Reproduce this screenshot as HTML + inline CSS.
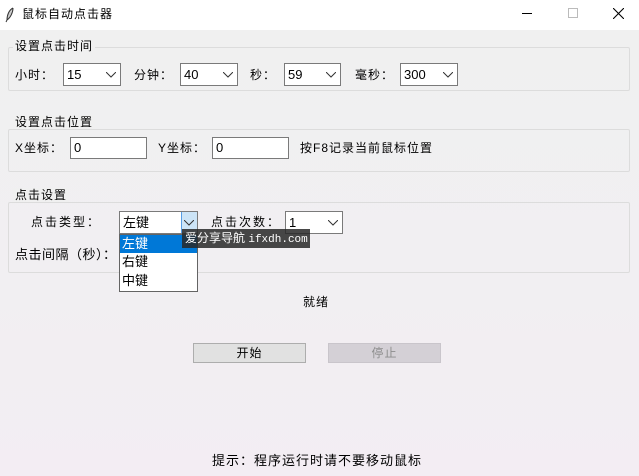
<!DOCTYPE html>
<html><head><meta charset="utf-8"><style>
*{margin:0;padding:0;box-sizing:border-box}
body{width:639px;height:476px;overflow:hidden;position:relative;background:linear-gradient(180deg,#f0f0f0 0%,#f1eff2 60%,#f3edf3 100%);font-family:"Liberation Sans","Noto Sans CJK SC",sans-serif;font-size:12px;color:#000;letter-spacing:1px}
.a{position:absolute;white-space:nowrap;line-height:14px}
.tb{position:absolute;left:0;top:0;width:639px;height:30px;background:#fff}
.grp{position:absolute;left:8px;width:622px;border:1px solid #dcdcdc;border-radius:2px}
.lbl{position:absolute;background:#f0f0f0;padding:0 2px;line-height:14px}
.cb{position:absolute;height:23px;background:#fff;border:1px solid #7a7a7a;padding-left:3px;line-height:21px;font-size:13px;letter-spacing:0}
.cb svg{position:absolute;right:4px;top:8px}
.en{position:absolute;height:22px;background:#fff;border:1px solid #7a7a7a;padding-left:3px;line-height:20px;font-size:13px;letter-spacing:0}
.btn{position:absolute;top:343px;width:113px;height:20px;border:1px solid #adadad;background:#e1e1e1;text-align:center;line-height:18px;font-size:12px}
</style></head><body>
<div class="tb">
<svg class="a" style="left:5px;top:7px" width="10" height="16" viewBox="0 0 10 16"><path d="M8 1C4 3 2 8 2 13L1 15M8 1C8 6 5 11 2 13" stroke="#333" fill="#ccc" stroke-width="1"/></svg>
<div class="a" style="left:22px;top:7px">鼠标自动点击器</div>
<div class="a" style="left:522px;top:13px;width:10px;height:1px;background:#000"></div>
<div class="a" style="left:568px;top:8px;width:10px;height:10px;border:1px solid #bbb"></div>
<svg class="a" style="left:613px;top:8px" width="11" height="11"><path d="M0 0L11 11M11 0L0 11" stroke="#000" stroke-width="1.1"/></svg>
</div>

<div class="grp" style="top:47px;height:44px"></div>
<div class="lbl" style="left:13px;top:39px">设置点击时间</div>
<div class="a" style="left:15px;top:68px">小时：</div>
<div class="cb" style="left:63px;top:63px;width:58px">15<svg width="10" height="6"><path d="M0 0L5 5L10 0" stroke="#333" fill="none"/></svg></div>
<div class="a" style="left:134px;top:68px">分钟：</div>
<div class="cb" style="left:180px;top:63px;width:58px">40<svg width="10" height="6"><path d="M0 0L5 5L10 0" stroke="#333" fill="none"/></svg></div>
<div class="a" style="left:250px;top:68px">秒：</div>
<div class="cb" style="left:284px;top:63px;width:57px">59<svg width="10" height="6"><path d="M0 0L5 5L10 0" stroke="#333" fill="none"/></svg></div>
<div class="a" style="left:355px;top:68px">毫秒：</div>
<div class="cb" style="left:400px;top:63px;width:58px">300<svg width="10" height="6"><path d="M0 0L5 5L10 0" stroke="#333" fill="none"/></svg></div>

<div class="grp" style="top:129px;height:43px"></div>
<div class="lbl" style="left:13px;top:115px">设置点击位置</div>
<div class="a" style="left:15px;top:141px">X坐标：</div>
<div class="en" style="left:70px;top:137px;width:77px">0</div>
<div class="a" style="left:158px;top:141px">Y坐标：</div>
<div class="en" style="left:212px;top:137px;width:77px">0</div>
<div class="a" style="left:300px;top:141px">按F8记录当前鼠标位置</div>

<div class="grp" style="top:202px;height:71px"></div>
<div class="lbl" style="left:13px;top:188px">点击设置</div>
<div class="a" style="left:31px;top:215px;letter-spacing:2px">点击类型：</div>
<div class="cb" style="left:119px;top:211px;width:79px">左键<div style="position:absolute;right:0;top:0;width:16px;height:21px;background:#cce4f7;border-left:1px solid #569de5"></div><svg width="10" height="6" style="right:3px"><path d="M0 0L5 5L10 0" stroke="#333" fill="none"/></svg></div>
<div class="a" style="left:211px;top:215px;letter-spacing:2px">点击次数：</div>
<div class="cb" style="left:285px;top:211px;width:58px">1<svg width="10" height="6"><path d="M0 0L5 5L10 0" stroke="#333" fill="none"/></svg></div>
<div class="a" style="left:15px;top:248px;font-size:13px;letter-spacing:0.5px">点击间隔（秒）：</div>
<div class="a" style="left:119px;top:234px;width:79px;height:58px;background:#fff;border:1px solid #646464"></div>
<div class="a" style="left:120px;top:235px;width:77px;height:18px;background:#0078d7;color:#fff;padding-left:2px;line-height:18px;font-size:13px;letter-spacing:0">左键</div>
<div class="a" style="left:122px;top:255px;font-size:13px;letter-spacing:0">右键</div>
<div class="a" style="left:122px;top:274px;font-size:13px;letter-spacing:0">中键</div>
<div class="a" style="left:182px;top:229px;width:128px;height:19px;background:rgba(40,40,40,.85);color:#fff;line-height:19px;padding-left:3px;font-size:12px;letter-spacing:0;overflow:hidden">爱分享导航 <span style="font-family:'Liberation Mono',monospace;font-size:11px">ifxdh.com</span></div>

<div class="a" style="left:303px;top:295px">就绪</div>
<div class="btn" style="left:193px">开始</div>
<div class="btn" style="left:328px;background:#d4d0d6;border-color:#c9c5cb;color:#8d8d8d">停止</div>
<div class="a" style="left:212px;top:454px;font-size:13px">提示：程序运行时请不要移动鼠标</div>
</body></html>
